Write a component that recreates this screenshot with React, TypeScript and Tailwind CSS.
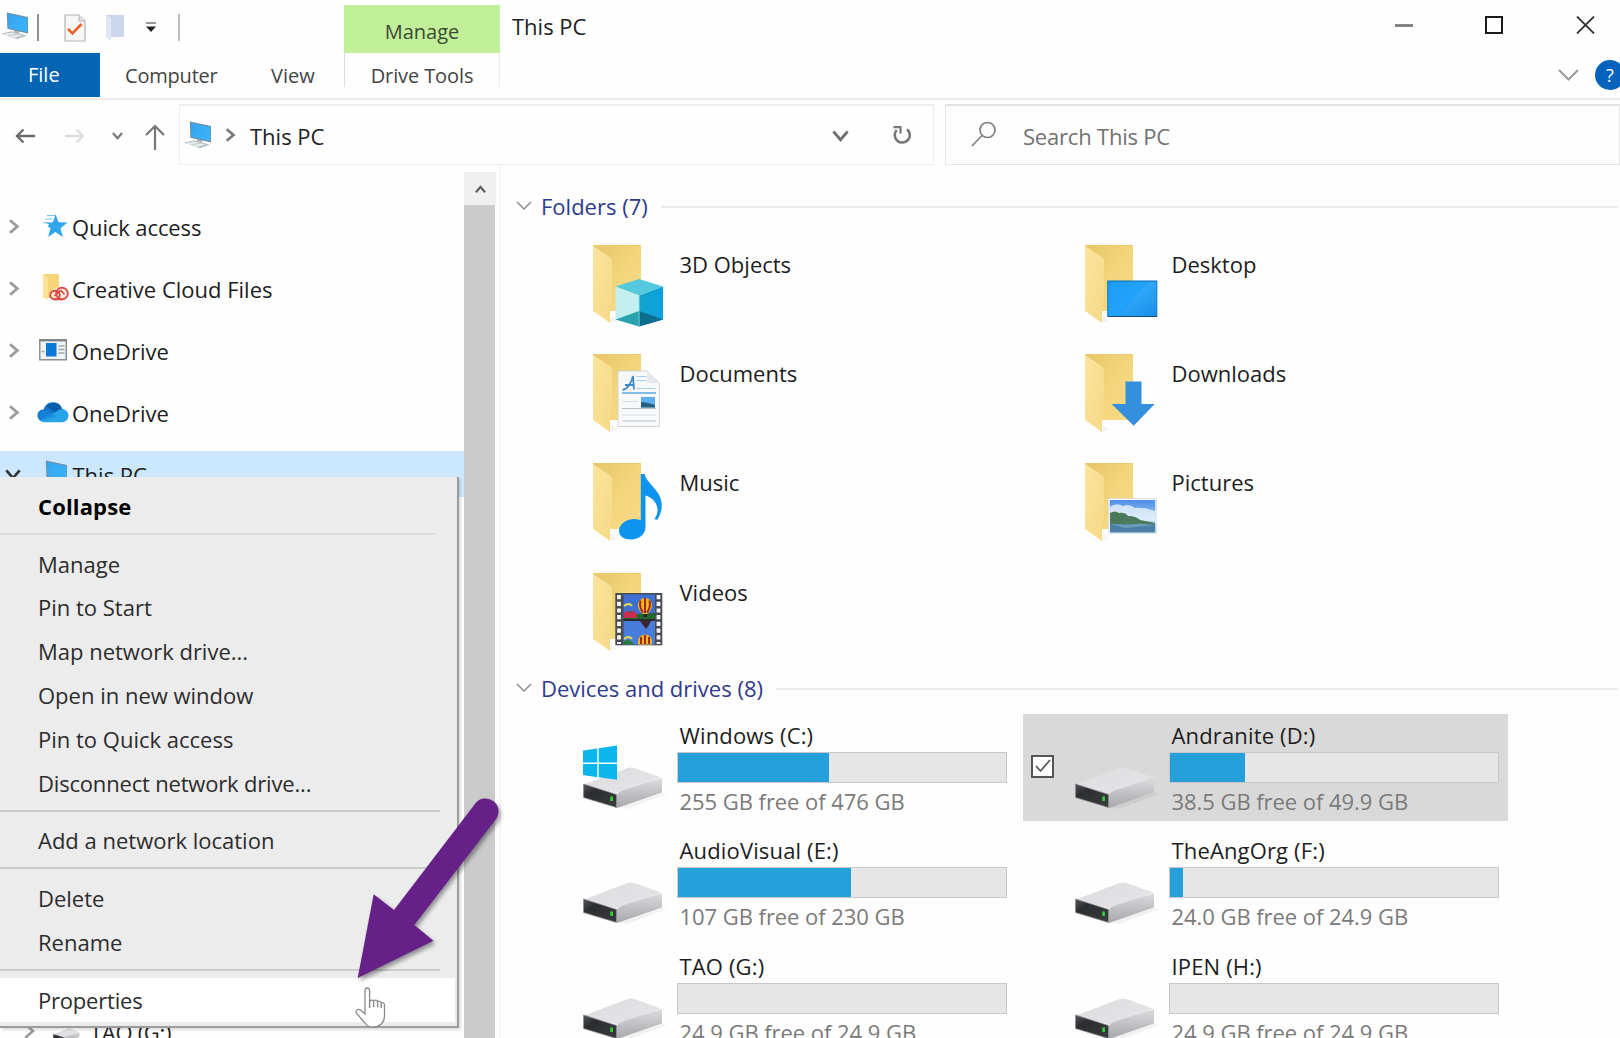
import React from 'react';

type P = { className?: string };

/* ---------- small icons ---------- */

function PcIcon({ className = '' }: P) {
  return (
    <svg width="28" height="28" viewBox="0 0 28 28" className={'shrink-0 ' + className}>
      <defs>
        <linearGradient id="pcs" x1="0" y1="0" x2="1" y2="1">
          <stop offset="0" stopColor="#35a4ee" />
          <stop offset="1" stopColor="#3bb4fb" />
        </linearGradient>
      </defs>
      <path d="M13 18l5 1.2v3.2l-5-1.2z" fill="#a9b4bb" />
      <path d="M0 21.5l11-2.2 15 4.4-10 3.6z" fill="#b9c1c5" />
      <path d="M2 22l9-1.6 4.5 1.3-9 2zM8 24.2l9-1.9 4 1.2-8 2.4z" fill="#e6eaec" />
      <path d="M5.8.5L27 5v16.4L6.4 16.8z" fill="#6f8aa0" />
      <path d="M6.8 1.8L26.4 6v14.3L7.4 16z" fill="url(#pcs)" />
    </svg>
  );
}

function Chevron({ dir, size = 12, w = 2, className = '' }: P & { dir: 'r' | 'd' | 'u'; size?: number; w?: number }) {
  const d = dir === 'r' ? 'M3.2 1L9 6 3.2 11' : dir === 'd' ? 'M1 3.2L6 9l5-5.800' : 'M1 9l5-5.800L11 9';
  return (
    <svg width={size} height={size} viewBox="0 0 12 12" fill="none" stroke="currentColor" strokeWidth={w} className={'shrink-0 ' + className}>
      <path d={d} />
    </svg>
  );
}

function StarIcon() {
  return (
    <svg width="28" height="28" viewBox="0 0 28 28">
      <path d="M14.500 2l3 8.200 9 .4-7 5.600 2.300 8.700-7.400-4.800-7.200 4.900 2.300-8.800-3-2.300 2-1.300-3.500-1.300 7-1z" fill="#2fa5ea" />
      <path d="M6 3.500h8M4 7h8M2.500 10.600h8" stroke="#7cc5ee" strokeWidth="1.200" />
    </svg>
  );
}

function CreativeCloudIcon() {
  return (
    <svg width="28" height="28" viewBox="0 0 28 28">
      <path d="M2 0h16v24H2z" fill="#f5d578" />
      <path d="M2 0l5 4v22l-5-3z" fill="#fbe39a" />
      <ellipse cx="18.500" cy="20" rx="9.500" ry="6.500" fill="#fbe9e2" opacity=".8" />
      <ellipse cx="14" cy="21" rx="4.800" ry="4.300" fill="none" stroke="#dc4a42" strokeWidth="1.900" />
      <ellipse cx="21" cy="19.500" rx="5.800" ry="5.800" fill="none" stroke="#dc4a42" strokeWidth="1.900" />
      <path d="M13.500 22l4.500-4.500q2-1.500 3.500.5l2 2.500M13 25.500h9" fill="none" stroke="#dc4a42" strokeWidth="1.600" />
    </svg>
  );
}

function WindowIcon() {
  return (
    <svg width="28" height="22" viewBox="0 0 28 22">
      <rect x=".75" y=".75" width="26.500" height="20" fill="#f1f3f4" stroke="#8b9297" strokeWidth="1.500" />
      <path d="M1 1.500h26" stroke="#7b8388" strokeWidth="1.800" />
      <rect x="7" y="4" width="10.500" height="13.500" fill="#0b78d4" />
      <path d="M19.500 7h6M19.500 10.500h6M19.500 14h6M2.500 12.500h3" stroke="#a2a9ae" strokeWidth="1.500" />
    </svg>
  );
}

function CloudIcon() {
  return (
    <svg width="32" height="22" viewBox="0 0 32 22">
      <path d="M6 20.500a6 6 0 0 1 .8-12A9.500 9.500 0 0 1 25 7.500a7 7 0 0 1-1 13z" fill="#1173cb" />
      <path d="M9 5.500A9.500 9.500 0 0 1 25 7.500l-6 4z" fill="#0a5bab" />
      <path d="M3 19l16-8c2-2.500 5-3.700 7.500-2.800a6.600 6.600 0 0 1-1.500 13H6.500A6 6 0 0 1 3 19z" fill="#28a3e8" />
      <path d="M1.500 16.500C1.500 12 5 9 9 9.300l10 6L4 20z" fill="#1487da" opacity=".7" />
    </svg>
  );
}

/* ---------- folder and drive artwork ---------- */

function Folder({ children }: { children: React.ReactNode }) {
  return (
    <svg width="76" height="86" viewBox="0 0 76 86" className="shrink-0">
      <defs>
        <linearGradient id="fb" x1="0" y1="0" x2="1" y2="1">
          <stop offset="0" stopColor="#e6c566" />
          <stop offset=".5" stopColor="#f3d57c" />
          <stop offset="1" stopColor="#f6db86" />
        </linearGradient>
        <linearGradient id="ff" x1="0" y1="0" x2="1" y2="1">
          <stop offset="0" stopColor="#fbe49c" />
          <stop offset="1" stopColor="#f5d987" />
        </linearGradient>
        <linearGradient id="cr" x1="0" y1="0" x2="1" y2="0">
          <stop offset="0" stopColor="#12a5cd" />
          <stop offset="1" stopColor="#0c9fe0" />
        </linearGradient>
        <linearGradient id="dt" x1="0" y1="0" x2="1" y2="1">
          <stop offset="0" stopColor="#1a9bf5" />
          <stop offset=".5" stopColor="#22a3fb" />
          <stop offset="1" stopColor="#0f87e4" />
        </linearGradient>
        <linearGradient id="sky" x1="0" y1="0" x2="0" y2="1">
          <stop offset="0" stopColor="#4d8ee8" />
          <stop offset="1" stopColor="#d8ecfa" />
        </linearGradient>
      </defs>
      <path d="M17 78l7-2-6-6z" fill="#f4f3f0" />
      <path d="M0 .5h48V66H16z" fill="url(#fb)" />
      <path d="M0 .5h48" stroke="#ecc96c" strokeWidth="1" />
      <path d="M0 .8l17 11.500q2 1.500 2 4V57l-2 3v18L0 66z" fill="url(#ff)" />
      {children}
    </svg>
  );
}

const overlays: Record<string, React.ReactNode> = {
  '3D Objects': (
    <g transform="translate(-.5 .5)">
      <path d="M46.600 33.500L70.600 41 46.600 50 23 41z" fill="#55c9de" />
      <path d="M23 41l23.600 9v31L23 74z" fill="#c5eef0" />
      <path d="M70.600 41l-24 9v31l24-7z" fill="url(#cr)" />
      <path d="M23 74l23.600-8.500V81z" fill="#2ba3ae" />
      <path d="M70.600 74l-24-8.500V81z" fill="#0b6e8e" />
      <path d="M46.600 50v31" stroke="#7fe0ec" strokeWidth=".8" />
    </g>
  ),
  Desktop: (
    <g>
      <rect x="22.800" y="36" width="49" height="35.500" fill="url(#dt)" stroke="#0d6fbd" strokeWidth="1" />
      <path d="M35 71L62 37h9.500v34z" fill="#fff" opacity=".05" />
      <path d="M23 71.500h49" stroke="#164f7e" strokeWidth="1.200" />
    </g>
  ),
  Documents: (
    <g>
      <path d="M25 17h29l12.500 12v43.500H25z" fill="#f6f8fa" stroke="#cdd1d5" strokeWidth=".9" />
      <path d="M54 17v12h12.500z" fill="#e6e9eb" />
      <path d="M29.500 36c5-1 9-7 10.500-14l1 13.500M32 31h9" fill="none" stroke="#3d8bce" strokeWidth="1.800" />
      <path d="M43.500 22.500h10M43.500 26.500h10M43.500 34.500h19" stroke="#9fcdea" strokeWidth="1.200" />
      <path d="M29 39h34" stroke="#5aa9de" strokeWidth="1.300" />
      <rect x="48" y="43" width="14" height="10.500" fill="#5ab0ea" />
      <path d="M48 48q5 0 14 3v2.500H48z" fill="#275f7f" />
      <path d="M29 54.500h34M29 67h34" stroke="#bcc1c5" strokeWidth="1.100" />
      <path d="M29 47.500h16M29 61h34" stroke="#d8dbde" strokeWidth="1" />
    </g>
  ),
  Downloads: <path d="M40.500 27.500h16V50h13.200l-21 21.700-22-21.700h13.800z" fill="#358fdf" />,
  Music: (
    <path
      d="M47.800 11h3.800c2 10 17 16 17.200 31 0 6-2 11-4.500 14.800l-3-.6c3-4 4.200-9 2.500-13.500C62 37 56.500 33.500 52.500 32.500V64c0 7.500-6.500 12.500-14.500 12.500-7 0-12-3.500-12-8.500 0-7 7.500-12 15-12 2.500 0 5 .5 6.800 1.500z"
      fill="#0d94ef"
    />
  ),
  Pictures: (
    <g>
      <rect x="23.300" y="35.700" width="48.400" height="35" fill="#fff" stroke="#c8d4dc" strokeWidth=".6" />
      <rect x="24.800" y="37" width="45.500" height="32.500" fill="url(#sky)" />
      <path d="M25 44q6-5 13-1 6-3 12 2 9-1 20 3v10H25z" fill="#f2f8fd" opacity=".75" />
      <path d="M25 50q5-3 9 0 6-1 9 3 8 0 12 4l15 3v1.500H25z" fill="#4b7a5a" />
      <path d="M25 61h45.300v8.500H25z" fill="#4a80a6" />
      <path d="M25 61q18 1 30-.5l15 1.500-30 3z" fill="#7aa7bd" opacity=".7" />
    </g>
  ),
  Videos: (
    <g>
      <rect x="22.300" y="20" width="47" height="52.300" fill="#4a4c50" />
      <path d="M26 22v49M65.500 22v49" stroke="#f4f4f4" strokeWidth="3.800" strokeDasharray="4.200 2.500" />
      <rect x="30.500" y="21.500" width="31.500" height="24.500" fill="#3f6fd0" />
      <rect x="30.500" y="48" width="31.500" height="23.500" fill="#4a7cdc" />
      <path d="M31 42q6-7 12-1l19-1v6H31z" fill="#24682e" />
      <path d="M31 40q4-4 6 0 4-5 7 2v3H31z" fill="#c82d4e" />
      <path d="M31 33q5-4 8 0M31 66q5-4 8 0" fill="none" stroke="#e7e04a" strokeWidth="2" />
      <path d="M45 32a7 7 0 0 1 14 0q0 5-5 9h-4q-5-4-5-9z" fill="#f3b81d" />
      <path d="M47.500 27.500q-1.500 7 2.500 12M52 25v15M56.500 27.500q1.500 7-2.500 12" fill="none" stroke="#a1281f" strokeWidth="2" />
      <path d="M50.500 41h3.500v3h-3.500z" fill="#27221e" />
      <path d="M47 48h11l-2 4-3 4-3-4z" fill="#3c2531" />
      <path d="M45 71.500v-3a7 7 0 0 1 14 0v3z" fill="#f3b81d" />
      <path d="M48 64v7M52 62v9M56 64v7" stroke="#a1281f" strokeWidth="2" />
      <path d="M31 68q6-3 10 3.500H31z" fill="#2b7838" />
      <path d="M30.500 47h31.500" stroke="#26282c" strokeWidth="2" />
    </g>
  ),
};

function DriveIcon({ windows, small }: { windows?: boolean; small?: boolean }) {
  return (
    <svg width={small ? 28 : 84} height={small ? 24 : 68} viewBox="0 0 84 68" className="shrink-0">
      <defs>
        <linearGradient id="dtop" x1="0" y1="0" x2="1" y2="1">
          <stop offset="0" stopColor="#dcdcde" />
          <stop offset="1" stopColor="#e6e6e8" />
        </linearGradient>
        <linearGradient id="dside" x1="0" y1="0" x2="0" y2="1">
          <stop offset="0" stopColor="#dcdcde" />
          <stop offset="1" stopColor="#a6a7aa" />
        </linearGradient>
        <linearGradient id="dface" x1="0" y1="0" x2="1" y2="1">
          <stop offset="0" stopColor="#55575a" />
          <stop offset=".3" stopColor="#2b2d2f" />
          <stop offset="1" stopColor="#3a3c3e" />
        </linearGradient>
      </defs>
      <path d="M34 63l46-14 4 1-40 15z" fill="#000" opacity=".05" />
      <path d="M1 40.500L44 24.200q4-1.300 8 0L78 33.500 36 50z" fill="url(#dtop)" />
      <path d="M33 51.500q3-4 8-5.500L79 34v14.500L34 64z" fill="url(#dside)" />
      <path d="M.5 40L33.500 50.500V63.500L.5 53.500z" fill="url(#dface)" stroke="#8b8d90" strokeWidth=".8" />
      <rect x="27.300" y="52.500" width="2.600" height="4.500" fill="#2fd83a" />
      {windows && (
        <path
          d="M0 6.500L14.300 4.400v14.200H0zM15.700 4.200L34 1.500v17H15.700zM0 20h14.300v13.200L0 31zM15.700 20H34v15.800l-18.300-2.500z"
          fill="#0bb5ee"
        />
      )}
    </svg>
  );
}

/* ---------- window chrome ---------- */

function TitleBar() {
  return (
    <div className="flex h-[53px] shrink-0">
      <div className="flex h-[51px] w-[344px] items-center">
        <PcIcon className="ml-[1px]" />
        <div className="ml-[8px] mt-[3px] h-[27px] w-[2px] bg-[#8f8f8f]" />
        <svg width="22" height="28" viewBox="0 0 22 28" className="ml-[25px] mt-[5px]">
          <path d="M1 1h14l6 6v20H1z" fill="#f6f6f6" stroke="#b4b4b4" strokeWidth="1.200" />
          <path d="M15 1v6h6" fill="#e4e4e4" stroke="#b4b4b4" strokeWidth="1" />
          <path d="M4 15l4.500 4.500L17.500 10" fill="none" stroke="#e8622b" strokeWidth="2.600" />
        </svg>
        <svg width="20" height="28" viewBox="0 0 20 28" className="ml-[19px] mt-[5px]">
          <path d="M1 1h18v22H4z" fill="#ccd6ec" />
          <path d="M1 1l5 3v23l-5-4z" fill="#dfe6f4" />
        </svg>
        <svg width="12" height="12" viewBox="0 0 12 12" className="ml-[20px] mt-[3px]">
          <path d="M1 2h10" stroke="#7d7d7d" strokeWidth="1.600" />
          <path d="M1 5.500h10L6 11z" fill="#222" />
        </svg>
        <div className="ml-[21px] mt-[3px] h-[27px] w-[2px] bg-[#bdbdbd]" />
      </div>
      <div className="mt-[5px] flex h-[48px] w-[156px] items-center justify-center bg-[#c2ef9a] pt-[5px] text-[20px] text-[#3c4a33]">
        Manage
      </div>
      <div className="ml-[12px] pt-[12px] text-[#222]">This PC</div>
      <div className="ml-auto mt-[16px] flex h-[18px] items-center">
        <div className="h-[3px] w-[18px] bg-[#858585]" />
        <div className="ml-[72px] h-[18px] w-[18px] border-2 border-[#1b1b1b]" />
        <svg width="19" height="18" viewBox="0 0 19 18" className="ml-[73px] mr-[25px]">
          <path d="M1 .5l17 17M18 .5l-17 17" stroke="#333" strokeWidth="1.800" />
        </svg>
      </div>
    </div>
  );
}

function TabRow() {
  return (
    <div className="flex h-[47px] shrink-0 border-b-2 border-[#ebebeb] text-[20px] text-[#444]">
      <div className="flex h-[44px] w-[100px] items-center bg-[#0465b4] pl-[28px] text-white">File</div>
      <div className="ml-[25px] w-[92px] pt-[9px] tracking-[-0.2px]">Computer</div>
      <div className="ml-[54px] w-[73px] pt-[9px]">View</div>
      <div className="h-[34px] w-[156px] border-x border-l-[#dcdcdc] border-r-[#ececec] pt-[9px] text-center tracking-[-0.1px]">Drive Tools</div>
      <div className="ml-auto flex h-[44px] w-[62px] items-center overflow-hidden text-[#9a9a9a]">
        <svg width="21" height="12" viewBox="0 0 21 12" fill="none" className="shrink-0">
          <path d="M1 1l9.500 9.500L20 1" stroke="currentColor" strokeWidth="2" />
        </svg>
        <div className="ml-[16px] flex size-[30px] shrink-0 items-center justify-center rounded-full bg-[#0563bd] text-[18px] text-white">
          ?
        </div>
      </div>
    </div>
  );
}

function NavRow() {
  return (
    <div className="flex h-[65px] shrink-0 items-center pt-[4px] text-[#7a7a7a]">
      <svg width="20" height="16" viewBox="0 0 20 16" fill="none" stroke="#6a6a6a" strokeWidth="2.400" className="ml-[15px] mt-[2px]">
        <path d="M20 8H2M8.500 1.500L2 8l6.500 6.500" />
      </svg>
      <svg width="20" height="16" viewBox="0 0 20 16" fill="none" stroke="#dcdcdc" strokeWidth="2.400" className="ml-[30px] mt-[2px]">
        <path d="M0 8h18M11.500 1.500L18 8l-6.500 6.500" />
      </svg>
      <Chevron dir="d" size={11} w={2.400} className="ml-[27px] mt-[2px]" />
      <svg width="20" height="26" viewBox="0 0 20 26" fill="none" stroke="#777" strokeWidth="2.200" className="ml-[22px] mt-[5px]">
        <path d="M10 26V2M1 11l9-9 9 9" />
      </svg>
      <div className="ml-[14px] flex h-[61px] w-[755px] items-center border border-t-2 border-[#ededed]">
        <PcIcon className="ml-[4px]" />
        <Chevron dir="r" size={14} w={2.300} className="ml-[11px]" />
        <div className="ml-[13px] w-[582px] pt-[1px] text-[#222]">This PC</div>
        <Chevron dir="d" size={17} w={2} className="mt-[1px] text-[#707070]" />
        <svg width="20" height="20" viewBox="0 0 20 20" fill="none" stroke="#777" strokeWidth="2.600" className="ml-[43px]">
          <path d="M15 4.200A7.500 7.500 0 1 1 4.700 5" />
          <path d="M1.500 2.200h7V8.500" strokeWidth="2.200" />
        </svg>
      </div>
      <div className="ml-[11px] flex h-[61px] flex-1 items-center border border-t-2 border-[#e4e4e4]">
        <svg width="26" height="26" viewBox="0 0 26 26" fill="none" stroke="#808080" strokeWidth="1.700" className="ml-[25px] -mt-[2px]">
          <circle cx="16.500" cy="9" r="7.500" />
          <path d="M11 14.500L1 25" />
        </svg>
        <div className="ml-[26px] pt-[1px] tracking-[-0.2px] text-[#727272]">Search This PC</div>
      </div>
    </div>
  );
}

/* ---------- navigation pane ---------- */

const tree = [
  { label: 'Quick access', icon: <StarIcon />, text: 'tracking-[-0.1px]', offset: 'ml-[14px]' },
  { label: 'Creative Cloud Files', icon: <CreativeCloudIcon />, text: '', offset: 'ml-[14px]' },
  { label: 'OneDrive', icon: <WindowIcon />, text: '', offset: 'ml-[12px] mr-[2px]' },
  { label: 'OneDrive', icon: <CloudIcon />, text: '', offset: 'ml-[12px] mr-[2px]' },
];

function Sidebar() {
  return (
    <div className="flex w-[464px] shrink-0 flex-col gap-[16px] pt-[38px] text-[#1d1d1d]">
      {tree.map((t, i) => (
        <div key={i} className="flex h-[46px] shrink-0 items-center">
          <Chevron dir="r" size={15} w={2.300} className="ml-[6px] mt-[1px] text-[#9b9b9b]" />
          <div className={'flex w-[37px] justify-center pl-[2px] ' + t.offset}>{t.icon}</div>
          <div className={'pt-[1px] ' + t.text}>{t.label}</div>
        </div>
      ))}
      <div className="flex h-[46px] shrink-0 items-center bg-[#cce8ff]">
        <Chevron dir="d" size={16} className="ml-[5px] text-[#333]" />
        <PcIcon className="ml-[19px]" />
        <div className="ml-[4.500px] pt-[1px]">This PC</div>
      </div>
      <div className="h-[480px] shrink-0" />
      <div className="flex h-[46px] shrink-0 items-center">
        <Chevron dir="r" size={16} className="ml-[21px] -mt-[2px] text-[#9b9b9b]" />
        <div className="ml-[16px]">
          <DriveIcon small />
        </div>
        <div className="ml-[9px] tracking-[-0.3px]">TAO (G:)</div>
      </div>
    </div>
  );
}

function ScrollBar() {
  return (
    <div className="flex w-[37px] shrink-0 flex-col border-r-2 border-[#f6f6f6] pt-[7px]">
      <div className="flex h-[33px] w-[32px] shrink-0 items-center justify-center bg-[#f0f0f0] pt-[2px] text-[#606060]">
        <Chevron dir="u" size={11} w={2.400} />
      </div>
      <div className="w-[31px] flex-1 bg-[#cbcbcb]" />
    </div>
  );
}

/* ---------- content pane ---------- */

const folders = ['3D Objects', 'Desktop', 'Documents', 'Downloads', 'Music', 'Pictures', 'Videos'];

const drives = [
  { name: 'Windows (C:)', used: 151, info: '255 GB free of 476 GB', windows: true },
  { name: 'Andranite (D:)', used: 75, info: '38.5 GB free of 49.9 GB', selected: true },
  { name: 'AudioVisual (E:)', used: 173, info: '107 GB free of 230 GB' },
  { name: 'TheAngOrg (F:)', used: 13, info: '24.0 GB free of 24.9 GB' },
  { name: 'TAO (G:)', used: 0, info: '24.9 GB free of 24.9 GB' },
  { name: 'IPEN (H:)', used: 0, info: '24.9 GB free of 24.9 GB' },
];

function GroupHeader({ label }: { label: string }) {
  return (
    <div className="flex h-[30px] shrink-0 items-center">
      <svg width="16" height="10" viewBox="0 0 16 10" fill="none" className="ml-[15px] -mt-[2px]">
        <path d="M1 1l7 7 7-7" stroke="#8c8c8c" strokeWidth="1.500" />
      </svg>
      <div className="-mt-[2px] ml-[9px] whitespace-nowrap text-[#2f3a8c]">{label}</div>
      <div className="ml-[13px] mr-[2px] h-[2px] flex-1 bg-[#ebebeb]" />
    </div>
  );
}

function Content() {
  return (
    <div className="flex min-w-0 flex-1 flex-col overflow-hidden pt-[27px]">
      <GroupHeader label="Folders (7)" />
      <div className="ml-[30px] mt-[23px] grid shrink-0 auto-rows-[109.200px] grid-cols-[492px_492px] text-[#1d1d1d]">
        {folders.map((f) => (
          <div key={f} className="flex pl-[62px]">
            <Folder>{overlays[f]}</Folder>
            <div className="ml-[10.500px] h-[30px] pt-[5px]">{f}</div>
          </div>
        ))}
      </div>
      <div className="-mt-[8px]">
        <GroupHeader label="Devices and drives (8)" />
      </div>
      <div className="ml-[30px] mt-[10px] grid shrink-0 grid-cols-[485px_485px] gap-x-[7px] gap-y-[8.400px]">
        {drives.map((d) => (
          <div key={d.name} className={d.selected ? 'flex h-[107px] bg-[#d9d9d9]' : 'flex h-[107px]'}>
            <div className="w-[52px] pl-[8px] pt-[41px]">
              {d.selected && (
                <div className="flex size-[23px] items-center justify-center border-2 border-[#555] bg-white">
                  <svg width="18" height="16" viewBox="0 0 18 16" fill="none">
                    <path d="M2 8l4.500 5L16 2" stroke="#555" strokeWidth="1.700" />
                  </svg>
                </div>
              )}
            </div>
            <div className="w-[94px] pt-[30px]">
              <DriveIcon windows={d.windows} />
            </div>
            <div className="flex w-[330px] flex-col pt-[8px]">
              <div className="h-[26px] pl-[2.500px] leading-[26px] tracking-[0.15px] text-[#1d1d1d]">{d.name}</div>
              <div className="mt-[4px] h-[31px] border border-[#c8c8c8] bg-[#e6e6e6]">
                <div className="h-full bg-[#26a0da]" style={{ width: d.used }} />
              </div>
              <div className="mt-[5px] h-[26px] whitespace-nowrap pl-[2.500px] leading-[26px] tracking-[-0.05px] text-[#7a7a7a]">{d.info}</div>
            </div>
          </div>
        ))}
      </div>
    </div>
  );
}

/* ---------- context menu ---------- */

const groups = [
  ['Manage', 'Pin to Start', 'Map network drive...', 'Open in new window', 'Pin to Quick access', 'Disconnect network drive...'],
  ['Add a network location'],
  ['Delete', 'Rename'],
];

function Separator({ faint }: { faint?: boolean }) {
  return (
    <div className="h-[14px] pt-[5px]">
      <div className={faint ? 'h-[2px] w-[436px] bg-[#dcdcdc]' : 'h-[2px] w-[440px] bg-[#cacaca]'} />
    </div>
  );
}

function ContextMenu() {
  return (
    <div className="absolute left-0 top-[477px] h-[551px] w-[459px] border-b-2 border-r-2 border-[#9c9c9c] bg-[#ececec] pt-[7px] text-[#2c2c2c] shadow-[2px_2px_2px_rgba(0,0,0,0.12)]">
      <div className="flex h-[43.800px] items-center pl-[38px] font-bold tracking-[0.15px] text-black">Collapse</div>
      {groups.map((g, i) => (
        <div key={i}>
          <Separator faint={i === 0} />
          {g.map((label) => (
            <div
              key={label}
              className={
                label.startsWith('Disconnect')
                  ? 'flex h-[43.800px] items-center pl-[38px] tracking-[-0.180px]'
                  : 'flex h-[43.800px] items-center pl-[38px]'
              }
            >
              {label}
            </div>
          ))}
        </div>
      ))}
      <Separator />
      <div className="flex h-[44px] w-[455px] items-center bg-white pl-[38px] tracking-[-0.2px]">Properties</div>
    </div>
  );
}

function Pointer() {
  return (
    <svg width="32" height="42" viewBox="0 0 32 42" className="absolute left-[355px] top-[987px]">
      <path
        d="M10 27V4q0-3 2.300-3T14.600 4v10q2-1.500 4-.5 2.500-1 4 .8 2.500-.6 3.600 1.500 3-.6 3.300 2v11q0 5-3 8-4 3.500-9 3.200-5-.3-7.500-4L1.300 26q-.8-2.500 1.200-3.500 2-.6 4.500 1.800z"
        fill="#fff"
        stroke="#8a8a8a"
        strokeWidth="1.300"
      />
      <path d="M14.600 13v8M18.600 13.500v6.500M22.600 14.500v6M26.200 16v5" stroke="#8a8a8a" strokeWidth="1.400" />
    </svg>
  );
}

function Arrow() {
  return (
    <svg width="160" height="200" viewBox="350 790 160 200" className="absolute left-[350px] top-[790px] drop-shadow-[2px_3px_2px_rgba(0,0,0,0.4)]">
      <path
        d="M394 910L475.300 803.400A13 13 0 0 1 496.300 818.700L414.300 925 433.500 940.700 357.700 978 373.700 894.300z"
        fill="#652188"
      />
    </svg>
  );
}

export default function App() {
  return (
    <div className="relative flex h-[1038px] w-[1620px] flex-col overflow-hidden bg-[#fefefe] font-['Open_Sans',sans-serif] text-[22px] leading-[28px]">
      <TitleBar />
      <TabRow />
      <NavRow />
      <div className="flex min-h-0 flex-1 overflow-hidden">
        <Sidebar />
        <ScrollBar />
        <Content />
      </div>
      <ContextMenu />
      <Pointer />
      <Arrow />
    </div>
  );
}
